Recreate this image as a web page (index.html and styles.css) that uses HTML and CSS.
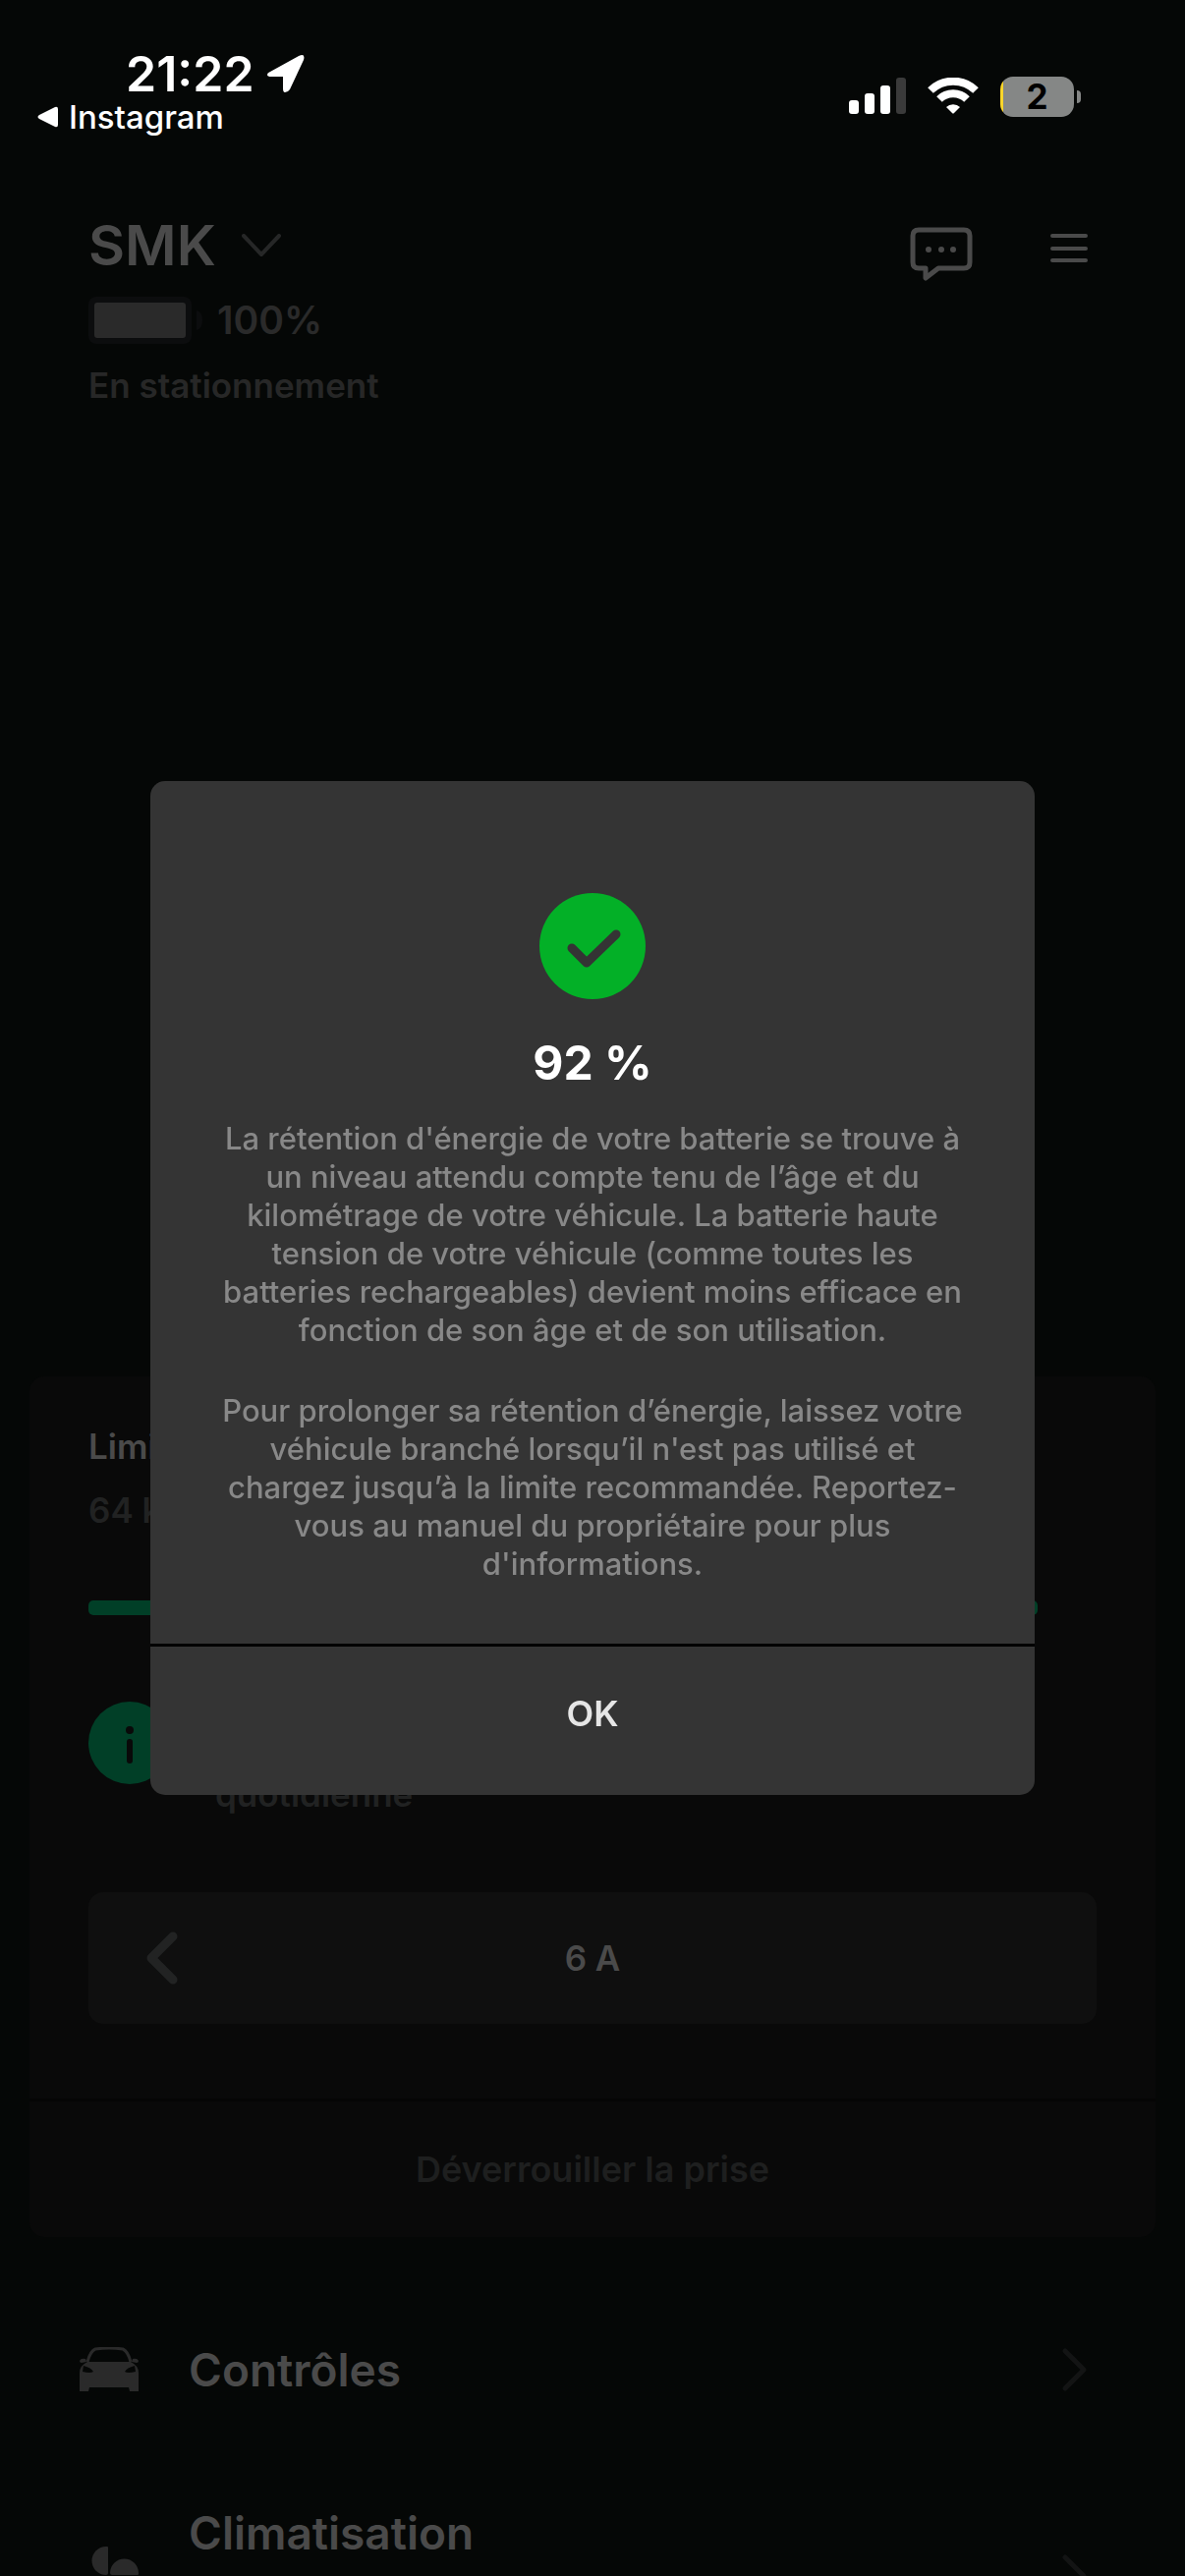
FILE: index.html
```html
<!DOCTYPE html>
<html lang="fr">

<head>
    <meta charset="UTF-8">
    <meta name="viewport" content="width=device-width, initial-scale=1.0">
    <title>SMK</title>
    <link rel="stylesheet" href="styles.css">
</head>

<body>
    <div class="status">
        <div class="status-left">
            <div class="time">
                21:22
                <svg width="40" height="40" viewBox="0 0 40 40"><path d="M4 18 L33 2 Q40 -1 38 6 L24 36 Q22 39 19 39 Q17 39 17 35 L17 23 L5 23 Q1 23 1 21 Q1 19 4 18z" fill="#fff"/></svg>
            </div>
            <a href="#" class="back">
                <svg width="22" height="22" viewBox="0 0 22 22"><path d="M2 9 L18 1 Q21 0 21 3 L21 19 Q21 22 18 21 L2 13 Q-1 11 2 9z" fill="#fff"/></svg>
                Instagram
            </a>
        </div>
        <div class="status-right">
            <svg width="58" height="38" viewBox="0 0 58 38" fill="#fff">
                <rect x="0" y="23" width="10" height="14" rx="3"/>
                <rect x="16" y="16" width="10" height="21" rx="3"/>
                <rect x="32" y="8" width="10" height="29" rx="3"/>
                <rect x="48" y="0" width="10" height="37" rx="3" fill="#3a3a3a"/>
            </svg>
            <svg class="wifi" width="52" height="38" viewBox="0 0 52 38" fill="none" stroke="#fff">
                <path d="M3 13 A33 33 0 0 1 49 13" stroke-width="8"/>
                <path d="M12 22 A20 20 0 0 1 40 22" stroke-width="8"/>
                <path d="M19 30 A10 10 0 0 1 33 30 L27 36 Q26 37 25 36z" fill="#fff" stroke="none"/>
            </svg>
            <div class="phone-battery"><span>2</span></div>
        </div>
    </div>

    <header class="header">
        <button class="vehicle">
            SMK
            <svg width="40" height="24" viewBox="0 0 40 24"><path d="M2 2 L20 21 L38 2" fill="none" stroke="#262727" stroke-width="4" stroke-linecap="round" stroke-linejoin="round"/></svg>
        </button>
        <div class="header-actions">
            <button aria-label="Messages">
                <svg width="64" height="56" viewBox="0 0 64 56">
                    <path d="M9 4 H55 Q61 4 61 10 V37 Q61 43 55 43 H29 L16 53 V43 H9 Q3 43 3 37 V10 Q3 4 9 4z" fill="none" stroke="#4a4a4a" stroke-width="5" stroke-linejoin="round"/>
                    <g fill="#4a4a4a"><circle cx="19" cy="24" r="3"/><circle cx="32" cy="24" r="3"/><circle cx="44" cy="24" r="3"/></g>
                </svg>
            </button>
            <button aria-label="Menu">
                <svg width="40" height="46" viewBox="0 0 40 46"><path d="M3 10 H37 M3 23 H37 M3 35 H37" stroke="#4a4a4a" stroke-width="4" stroke-linecap="round"/></svg>
            </button>
        </div>
    </header>

    <div class="charge">
        <svg width="117" height="48" viewBox="0 0 117 48">
            <rect x="0" y="0" width="105" height="48" rx="8" fill="#0c0d0e"/>
            <rect x="6" y="6" width="93" height="36" rx="3" fill="#2a2a2a"/>
            <path d="M110 14 Q116 15 116 24 Q116 33 110 34z" fill="#0c0d0e"/>
        </svg>
        100%
    </div>
    <div class="state">En stationnement</div>
    <div class="car-view"></div>

    <main>
        <section class="card">
            <div class="card-body">
                <h2>Limite</h2>
                <div class="rate">64 km/h</div>
                <div class="bar"><div class="bar-fill"></div></div>
                <div class="info">
                    <svg width="84" height="84" viewBox="0 0 84 84">
                        <circle cx="42" cy="42" r="42" fill="#013f27"/>
                        <circle cx="42" cy="29" r="4" fill="#090909"/>
                        <path d="M42 41 V60" stroke="#090909" stroke-width="6" stroke-linecap="round"/>
                    </svg>
                    <p>Limite recommandée<br>pour une utilisation<br>quotidienne</p>
                </div>
                <div class="stepper">
                    <button aria-label="Diminuer">
                        <svg width="34" height="56" viewBox="0 0 34 56"><path d="M28 6 L6 28 L28 50" fill="none" stroke="#222323" stroke-width="9" stroke-linecap="round" stroke-linejoin="round"/></svg>
                    </button>
                    <span>6 A</span>
                </div>
            </div>
            <button class="unlock">Déverrouiller la prise</button>
        </section>

        <nav class="menu">
            <a href="#" class="menu-item">
                <svg width="60" height="46" viewBox="0 0 60 46">
                    <path d="M8 15 Q11 4 16 2 Q30 0 44 2 Q49 4 52 15" fill="none" stroke="#2a2a2a" stroke-width="3"/>
                    <path d="M0 14 Q1 11 6 12 L7 15 L2 16 Q0 16 0 14z M60 14 Q59 11 54 12 L53 15 L58 16 Q60 16 60 14z" fill="#2a2a2a"/>
                    <path d="M8 15 H52 Q60 19 60 26 V45 H51 L50 41 H10 L9 45 H0 V26 Q0 19 8 15z" fill="#2a2a2a"/>
                    <path d="M4 19 Q12 21 14 25 Q11 27 3 25z M56 19 Q48 21 46 25 Q49 27 57 25z" fill="#050706"/>
                </svg>
                <span class="menu-label">Contrôles</span>
                <svg width="28" height="46" viewBox="0 0 28 46"><path d="M4 4 L23 23 L4 42" fill="none" stroke="#131414" stroke-width="5" stroke-linecap="round" stroke-linejoin="round"/></svg>
            </a>
            <a href="#" class="menu-item">
                <svg width="60" height="60" viewBox="0 0 60 60" fill="#2a2a2a">
                    <path id="blade" d="M27 0 H28 Q29 0 29 1 V27 Q29 29 27 29 A14 14 0 0 1 27 0z"/>
                    <use href="#blade" transform="rotate(90 30 30)"/>
                    <use href="#blade" transform="rotate(180 30 30)"/>
                    <use href="#blade" transform="rotate(270 30 30)"/>
                </svg>
                <span class="menu-label two-lines">Climatisation</span>
                <svg width="28" height="46" viewBox="0 0 28 46"><path d="M4 4 L23 23 L4 42" fill="none" stroke="#131414" stroke-width="5" stroke-linecap="round" stroke-linejoin="round"/></svg>
            </a>
        </nav>
    </main>

    <div class="overlay">
        <div class="modal" role="dialog" aria-labelledby="modal-title">
            <div class="modal-body">
                <svg width="108" height="108" viewBox="0 0 108 108">
                    <circle cx="54" cy="54" r="54" fill="#03b027"/>
                    <path d="M33 56 L48 71 L78 42" fill="none" stroke="#343434" stroke-width="9" stroke-linecap="round" stroke-linejoin="round"/>
                </svg>
                <h1 id="modal-title">92 %</h1>
                <p>La rétention d'énergie de votre batterie se trouve à un niveau attendu compte tenu de l’âge et du kilométrage de votre véhicule. La batterie haute tension de votre véhicule (comme toutes les batteries rechargeables) devient moins efficace en fonction de son âge et de son utilisation.</p>
                <p>Pour prolonger sa rétention d’énergie, laissez votre véhicule branché lorsqu’il n'est pas utilisé et chargez jusqu’à la limite recommandée. Reportez-vous au manuel du propriétaire pour plus d'informations.</p>
            </div>
            <button class="ok">OK</button>
        </div>
    </div>
</body>

</html>
```
FILE: styles.css
```css
* {
    margin: 0;
    padding: 0;
    box-sizing: border-box;
}

body {
    height: 100vh;
    overflow: hidden;
    background-color: #050706;
    color: #4a4a4a;
    font-family: Inter, "Liberation Sans", sans-serif;
    font-size: 35px;
    font-weight: 600;
    line-height: 48px;
}

svg {
    display: block;
    flex: none;
}

button {
    border: none;
    background: none;
    color: inherit;
    font: inherit;
}

a {
    color: inherit;
    text-decoration: none;
}

/* 状态栏 */
.status {
    display: flex;
    justify-content: space-between;
    align-items: center;
    padding: 50px 106px 0 38px;
    color: #fff;
}

.time {
    display: flex;
    align-items: center;
    gap: 12px;
    padding-left: 90px;
    font-size: 50px;
    line-height: 50px;
}

.back {
    display: flex;
    align-items: center;
    gap: 10px;
    font-size: 33px;
    font-weight: 500;
    line-height: 38px;
}

.status-right {
    display: flex;
    align-items: center;
    gap: 22px;
    padding-top: 8px;
}

.phone-battery {
    position: relative;
    width: 75px;
    height: 41px;
    margin-right: 7px;
    border-radius: 13px;
    background: linear-gradient(to right, #fcd62a 3px, #858786 3px);
    color: #000;
    font-weight: 700;
    line-height: 41px;
    text-align: center;
}

.phone-battery::after {
    content: "";
    position: absolute;
    top: 14px;
    right: -7px;
    width: 4px;
    height: 13px;
    border-radius: 0 4px 4px 0;
    background-color: #858786;
}

/* 头部 */
.header {
    display: flex;
    justify-content: space-between;
    align-items: flex-start;
    padding: 82px 98px 0 90px;
}

.vehicle {
    display: flex;
    align-items: center;
    gap: 26px;
    font-size: 57px;
    line-height: 60px;
}

.header-actions {
    display: flex;
    align-items: flex-start;
    gap: 78px;
    padding-top: 10px;
}

.charge {
    display: flex;
    align-items: center;
    gap: 14px;
    padding: 16px 90px 0;
    color: #2a2a2a;
    font-size: 39px;
}

.state {
    padding: 18px 90px 0;
    color: #272727;
}

.car-view {
    height: 985px;
}

/* 充电卡片 */
.card {
    margin: 0 30px;
    border-radius: 15px;
    background-color: #090909;
    overflow: hidden;
}

.card-body {
    padding: 47px 60px 76px;
}

.card h2 {
    font-size: 35px;
    font-weight: 600;
}

.rate {
    margin-top: 17px;
    color: #212222;
}

.bar {
    height: 15px;
    margin-top: 68px;
}

.bar-fill {
    width: calc(100% - 60px);
    height: 15px;
    border-radius: 5px;
    background-color: #013f27;
}

.info {
    display: flex;
    align-items: center;
    gap: 45px;
    margin-top: 52px;
    color: #212222;
    line-height: 52px;
}

.stepper {
    display: grid;
    grid-template-columns: 60px 1fr 60px;
    align-items: center;
    height: 134px;
    margin-top: 74px;
    padding: 0 58px;
    border-radius: 15px;
    background-color: #0f0f0f;
    text-align: center;
}

.unlock {
    width: 100%;
    height: 141px;
    border-top: 3px solid #050505;
    color: #1e1f1f;
    font-size: 36px;
}

/* 菜单 */
.menu {
    margin-top: 30px;
    padding: 0 98px 0 81px;
}

.menu-item {
    display: flex;
    align-items: center;
    gap: 51px;
    height: 210px;
    font-size: 46px;
    line-height: 56px;
}

.menu-label {
    flex: 1;
}

.two-lines {
    min-height: 144px;
}

/* 弹窗 */
.overlay {
    position: fixed;
    top: 0;
    right: 0;
    bottom: 0;
    left: 0;
    display: flex;
    align-items: center;
    padding: 0 153px;
}

.modal {
    width: 100%;
    border-radius: 15px;
    background-color: #343434;
    text-align: center;
    overflow: hidden;
}

.modal-body {
    padding: 114px 70px 62px;
}

.modal-body svg {
    margin: 0 auto;
}

.modal h1 {
    margin: 37px 0 29px;
    color: #fff;
    font-size: 48px;
    font-weight: 700;
    line-height: 56px;
}

.modal p {
    color: #888;
    font-size: 31px;
    font-weight: 500;
    line-height: 39px;
}

.modal p + p {
    margin-top: 43px;
}

.ok {
    width: 100%;
    height: 154px;
    padding-bottom: 15px;
    border-top: 3px solid #000;
    color: #e6e6e6;
    font-size: 36px;
}
```
